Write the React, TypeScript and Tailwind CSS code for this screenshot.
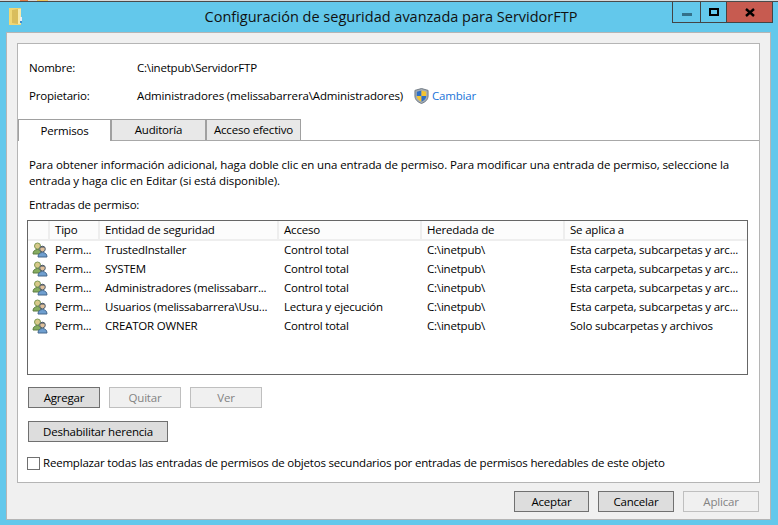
const font = "font-['Open_Sans','Noto_Sans',sans-serif]";

const rows = [
  ["TrustedInstaller", "Control total", "Esta carpeta, subcarpetas y arc..."],
  ["SYSTEM", "Control total", "Esta carpeta, subcarpetas y arc..."],
  ["Administradores (melissabarr...", "Control total", "Esta carpeta, subcarpetas y arc..."],
  ["Usuarios (melissabarrera\\Usu...", "Lectura y ejecución", "Esta carpeta, subcarpetas y arc..."],
  ["CREATOR OWNER", "Control total", "Solo subcarpetas y archivos"],
];

const UsersIcon = () => (
  <svg width="16" height="16" viewBox="0 0 16 16" className="shrink-0">
    <circle cx="5.500" cy="4" r="3" fill="#d8c98a" stroke="#7f9a55" />
    <path d="M1 12c0-3 2-4.500 4.500-4.500S9 9 9 12z" fill="#86ad62" stroke="#5d7d40" />
    <circle cx="10.500" cy="7" r="2.800" fill="#e0c09a" stroke="#4f5f70" />
    <path d="M8 5.500c.8-1.500 4-1.500 5 0z" fill="#3f4c5a" />
    <path d="M6 15c0-3 2-4.500 4.500-4.500S15 12 15 15z" fill="#6f9fd0" stroke="#44678c" />
  </svg>
);

const Shield = () => (
  <svg width="15" height="16" viewBox="0 0 16 17">
    <path d="M8 .5 15 2.500v6c0 4-3 6.500-7 8-4-1.500-7-4-7-8v-6z" fill="#a5adb5" stroke="#6d7680" />
    <path d="M8 2.500V8.500H3V4z" fill="#2f6fc4" />
    <path d="M8 2.500 13 4V8.500H8z" fill="#f4c430" />
    <path d="M3 8.500h5v6c-2.500-1-5-3-5-6z" fill="#f4c430" />
    <path d="M8 8.500h5c0 3-2.500 5-5 6z" fill="#2f6fc4" />
  </svg>
);

const Button = ({ label, disabled, className = "" }: { label: string; disabled?: boolean; className?: string }) => (
  <div
    className={`flex h-[21px] items-center justify-center border ${
      disabled ? "border-[#bfbfbf] bg-[#f0f0f0] text-[#838383]" : "border-[#707070] bg-[#dddddd] text-black"
    } ${className}`}
  >
    {label}
  </div>
);

export default function App() {
  return (
    <div className={`${font} flex h-[525px] w-[778px] flex-col overflow-hidden bg-[#63c8eb] text-[11.5px] tracking-[-0.2px] whitespace-nowrap text-black`}>
      <div className="flex h-[1px] shrink-0 bg-[#d8d8d8]">
        <div className="ml-[20px] w-[8px] bg-[#e07b45]" />
        <div className="ml-[9px] w-[11px] bg-[#edc65a]" />
      </div>
      <div className="h-[1px] shrink-0 bg-[#4a4a4a]" />
      <div className="flex h-[30px] shrink-0 items-start">
        <svg width="14" height="17" viewBox="0 0 14 17" className="ml-[9px] mt-[6px]">
          <path d="M0 0h12v17H0z" fill="#efd775" />
          <path d="M3 2l6-1v15l-6-1z" fill="#d9bd5c" />
          <path d="M9 1h3v15H9z" fill="#f7e9a8" />
          <path d="M11 9h2v6h-2z" fill="#e8edf2" />
          <path d="M11 13h2v2h-2z" fill="#3f8fd0" />
        </svg>
        <div className="flex-1 pl-[87px] pt-[5px] text-center text-[14.500px] leading-[20px] tracking-[0px] text-[#111]">
          Configuración de seguridad avanzada para ServidorFTP
        </div>
        <div className="mr-[5px] flex h-[21px] w-[101px] border-x border-b border-[#444]">
          <div className="flex w-[28px] items-center justify-center border-r border-[#444]">
            <div className="mt-[4px] h-[3px] w-[10px] bg-[#33718a]" />
          </div>
          <div className="flex w-[26px] items-center justify-center border-r border-[#444]">
            <div className="h-[8px] w-[10px] border-2 border-black" />
          </div>
          <div className="flex flex-1 items-center justify-center bg-[#c75b50]">
            <svg width="10" height="9" viewBox="0 0 10 9">
              <path d="M1 1l8 7M9 1L1 8" stroke="#000" strokeWidth="2.400" />
            </svg>
          </div>
        </div>
      </div>

      <div className="mb-[5px] ml-[6px] mr-[7px] flex flex-1 flex-col border border-[#b5b5b5] bg-[#f0f0f0] px-[10px] pt-[10px]">
        <div className="flex h-[440px] flex-col border border-[#b5b5b5] bg-white px-[11px]">
          <div className="mt-[15px] flex h-[17px] items-center">
            <span className="w-[108px]">Nombre:</span>
            <span>C:\inetpub\ServidorFTP</span>
          </div>
          <div className="mt-[11px] flex h-[18px] items-center">
            <span className="w-[108px]">Propietario:</span>
            <span className="tracking-[-0.14px]">Administradores (melissabarrera\Administradores)</span>
            <span className="ml-[11px] flex"><Shield /></span>
            <span className="ml-[3px] text-[#1a73d8]">Cambiar</span>
          </div>

          <div className="-mx-[11px] mt-[14px] flex h-[22px] items-end border-b border-[#a8a8a8]">
            <div className="mb-[-1px] flex h-[22px] w-[94px] items-center justify-center border-l border-r-2 border-t border-[#a0a0a0] bg-white">Permisos</div>
            <div className="flex h-[21px] w-[95px] items-center justify-center border-r-2 border-t border-[#a0a0a0] bg-[#e8e8e8]">Auditoría</div>
            <div className="flex h-[21px] w-[94px] items-center justify-center border-r border-t border-[#a0a0a0] bg-[#e8e8e8]">Acceso efectivo</div>
          </div>

          <p className="mt-[16px] leading-[16px] tracking-[-0.1px]">
            Para obtener información adicional, haga doble clic en una entrada de permiso. Para modificar una entrada de permiso, seleccione la
            <br />
            entrada y haga clic en Editar (si está disponible).
          </p>
          <div className="mt-[8px] leading-[16px]">Entradas de permiso:</div>

          <div className="-ml-[2px] mt-[7px] h-[155px] w-[721px] shrink-0 border border-[#666] bg-white">
            <div className="flex h-[20px] border-b-2 border-[#eeeeee] bg-[#fcfcfc] leading-[18px]">
              <div className="w-[22px] shrink-0 border-r-2 border-[#eeeeee]" />
              <div className="w-[50px] shrink-0 border-r-2 border-[#eeeeee] pl-[5px]">Tipo</div>
              <div className="w-[179px] shrink-0 border-r-2 border-[#eeeeee] pl-[5px]">Entidad de seguridad</div>
              <div className="w-[143px] shrink-0 border-r-2 border-[#eeeeee] pl-[5px]">Acceso</div>
              <div className="w-[143px] shrink-0 border-r-2 border-[#eeeeee] pl-[5px]">Heredada de</div>
              <div className="flex-1 pl-[5px]">Se aplica a</div>
            </div>
            {rows.map((row) => (
              <div key={row[0]} className="flex h-[19px] items-center pb-[2px]">
                <div className="flex w-[22px] shrink-0 pl-[4px]"><UsersIcon /></div>
                <div className="w-[50px] shrink-0 pl-[5px]">Perm...</div>
                <div className="w-[179px] shrink-0 pl-[5px]">{row[0]}</div>
                <div className="w-[143px] shrink-0 pl-[5px]">{row[1]}</div>
                <div className="w-[143px] shrink-0 pl-[5px]">C:\inetpub\</div>
                <div className="flex-1 pl-[5px]">{row[2]}</div>
              </div>
            ))}
          </div>

          <div className="-ml-px mt-[12px] flex gap-[9px]">
            <Button label="Agregar" className="w-[72px]" />
            <Button label="Quitar" disabled className="w-[72px]" />
            <Button label="Ver" disabled className="w-[72px]" />
          </div>
          <Button label="Deshabilitar herencia" className="-ml-px mt-[13px] w-[140px]" />
          <div className="-ml-[2px] mt-[14px] flex h-[14px] items-center gap-[3px]">
            <div className="h-[13px] w-[13px] border border-[#707070] bg-white" />
            <span>Reemplazar todas las entradas de permisos de objetos secundarios por entradas de permisos heredables de este objeto</span>
          </div>
        </div>

        <div className="mt-[8px] flex justify-end gap-[9px] pr-[1px]">
          <Button label="Aceptar" className="w-[75px] border-[#3c7fb1]" />
          <Button label="Cancelar" className="w-[76px]" />
          <Button label="Aplicar" disabled className="w-[76px]" />
        </div>
      </div>
    </div>
  );
}
